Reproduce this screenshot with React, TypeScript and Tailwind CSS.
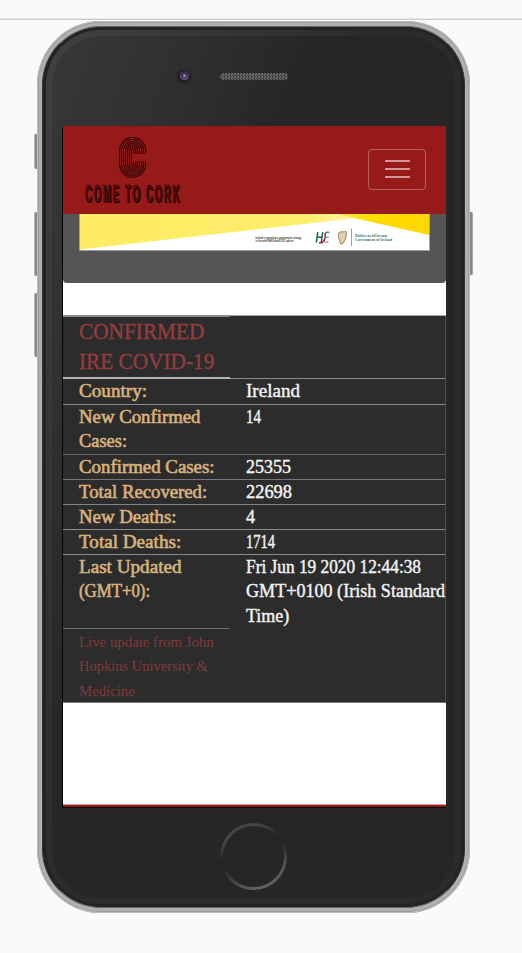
import { useLayoutEffect, useRef, useState } from "react";

type FitProps = { text: string; width: number; className?: string };

/* One line of text, stretched horizontally to a given measure. */
function Fit({ text, width, className = "" }: FitProps) {
  const ref = useRef<HTMLSpanElement>(null);
  const [scale, setScale] = useState(1);
  useLayoutEffect(() => {
    if (ref.current) setScale(width / ref.current.offsetWidth);
  }, [width, text]);
  return (
    <span className="block" style={{ width }}>
      <span
        ref={ref}
        className={`inline-block origin-left whitespace-nowrap align-top ${className}`}
        style={{ transform: `scaleX(${scale})` }}
      >
        {text}
      </span>
    </span>
  );
}

type Line = [string, number];
type Row = { label: Line[]; value: Line[]; height: string; line: string };

const rows: Row[] = [
  { label: [["Country:", 68]], value: [["Ireland", 54]], height: "h-[26px]", line: "border-[#8a8a8a]" },
  { label: [["New Confirmed", 121], ["Cases:", 48]], value: [["14", 15]], height: "h-[50px]", line: "border-[#656565]" },
  { label: [["Confirmed Cases:", 135]], value: [["25355", 45]], height: "h-[25px]", line: "border-[#777777]" },
  { label: [["Total Recovered:", 128]], value: [["22698", 46]], height: "h-[25px]", line: "border-[#858585]" },
  { label: [["New Deaths:", 97]], value: [["4", 9]], height: "h-[25px]", line: "border-[#8a8a8a]" },
  { label: [["Total Deaths:", 102]], value: [["1714", 29]], height: "h-[25px]", line: "border-[#8a8a8a]" },
];

function Label({ lines }: { lines: Line[] }) {
  return (
    <div className="w-[167px] shrink-0 pl-4 text-[18px] leading-[24.6px] text-[#d8b27c] [-webkit-text-stroke:0.6px_#d8b27c]">
      {lines.map(([t, w]) => <Fit key={t} text={t} width={w} />)}
    </div>
  );
}

function Value({ lines }: { lines: Line[] }) {
  return (
    <div className="pl-4 text-[18px] leading-[24.6px] text-[#f4f4f4] [-webkit-text-stroke:0.4px_#f4f4f4]">
      {lines.map(([t, w]) => <Fit key={t} text={t} width={w} />)}
    </div>
  );
}

function Logo() {
  return (
    <div className="ml-[22px] mt-[11px] w-[96px]">
      <svg className="ml-[34px] block" width="28" height="41" viewBox="0 0 28 41" fill="none" stroke="#2c0505" strokeWidth="1.05">
        {[0, 2, 4, 6, 8, 10, 12].map((d) => (
          <path
            key={d}
            d={`M${26.7 - d} 17V13.6A${13.1 - d} ${13.1 - d} 0 0 0 ${0.5 + d} 13.6V27.2A${13.1 - d} ${13.1 - d} 0 0 0 ${26.7 - d} 27.2V24.2`}
          />
        ))}
      </svg>
      <div className="mt-[4px] font-['Liberation_Sans',sans-serif] text-[24px] font-bold leading-[23px] tracking-[4px] text-[#5a0f0e] [-webkit-text-stroke:0.5px_#1c0303] [text-shadow:2px_1px_0_#0c0101]">
        <Fit text="COME TO CORK" width={96} />
      </div>
    </div>
  );
}

function Banner() {
  return (
    <svg className="mx-auto block" width="351" height="37" viewBox="79 214 351 37">
      <defs>
        <linearGradient id="pale" x1="0" x2="1">
          <stop offset="0" stopColor="#ffec62" />
          <stop offset=".8" stopColor="#ffed6c" />
          <stop offset="1" stopColor="#fff3a0" />
        </linearGradient>
        <linearGradient id="gold" x1="0" x2="1">
          <stop offset="0" stopColor="#ffe84a" />
          <stop offset=".35" stopColor="#ffdd00" />
          <stop offset="1" stopColor="#ffd800" />
        </linearGradient>
      </defs>
      <path d="M79 214H430V251H79Z" fill="#a0a0a0" />
      <path d="M80 214H429V250H80Z" fill="#fff" />
      <path d="M80 214H342L355 218.2L80 249.6Z" fill="url(#pale)" />
      <path d="M338 214H429V235L355 218.2Z" fill="url(#gold)" />
      <g fontFamily="Liberation Sans, sans-serif" fontWeight="bold" fontSize="3.4" fill="#333333">
        <text x="255.5" y="239.3" textLength="46" lengthAdjust="spacingAndGlyphs">Ireland is operating a containment strategy</text>
        <text x="255.5" y="242.2" textLength="38" lengthAdjust="spacingAndGlyphs">in line with WHO and ECDC advice</text>
      </g>
      <g fill="none" strokeWidth="1.5">
        <path d="M317.7 232.2L316.4 242.6M322.7 232.2L321.2 242.6M317 237.3H322" stroke="#10655b" />
        <path d="M328.5 232.2C323.5 231.8 325.5 236 325 238C324.4 241.5 323 243.2 319 242.8" stroke="#b51f42" />
        <path d="M326 232.3H329.5M326 237.2H328.8M325 242.1H328.5" stroke="#448c82" strokeWidth="1" />
      </g>
      <g stroke="#b09a68" fill="none">
        <path d="M338.5 233.5C341 230.5 343 232.5 346 231.5C347 237 344.5 243 341 244.2C339.8 241.2 337.8 239 338.5 233.5Z" fill="#ece5cc" strokeWidth="1.3" />
        <path d="M341 233V242M343 233V241M345 233V238" strokeWidth=".5" />
      </g>
      <path d="M351.5 228.5V246" stroke="#6da8a0" strokeWidth=".9" />
      <g fontFamily="Liberation Serif, serif" fontWeight="bold" fontSize="4.8" fill="#317c72">
        <text x="355" y="237" textLength="32" lengthAdjust="spacingAndGlyphs">Rialtas na hÉireann</text>
        <text x="355" y="241.2" textLength="37" lengthAdjust="spacingAndGlyphs">Government of Ireland</text>
      </g>
    </svg>
  );
}

function CovidTable() {
  return (
    <section className="h-[387px] border-b border-r border-[#777777] border-r-[#4b4b4b] bg-[#2c2c2c]">
      <div className="flex h-[63px]">
        <h2 className="-mt-px h-[64px] w-[167px] border-b-2 border-t-2 border-b-[#b8b4b4] border-t-[#8a8c8a] pl-4 text-[23px] leading-[30px] text-[#943c40] [-webkit-text-stroke:0.4px_#943c40]">
          <Fit text="CONFIRMED" width={125} />
          <Fit text="IRE COVID-19" width={135} />
        </h2>
        <div className="flex-1 border-b border-[#8a8a8a]" />
      </div>
      {rows.map((r) => (
        <div key={r.label[0][0]} className={`flex border-b ${r.height} ${r.line}`}>
          <Label lines={r.label} />
          <Value lines={r.value} />
        </div>
      ))}
      <div className="flex h-[74px]">
        <div className="h-full border-b border-[#707070]">
          <Label lines={[["Last Updated", 102], ["(GMT+0):", 71]]} />
        </div>
        <Value lines={[["Fri Jun 19 2020 12:44:38", 175], ["GMT+0100 (Irish Standard", 199], ["Time)", 43]]} />
      </div>
      <div className="pl-4 pt-px text-[14.5px] leading-[24.5px] text-[#803a3e]">
        <Fit text="Live update from John" width={135} />
        <Fit text="Hopkins University &" width={129} />
        <Fit text="Medicine" width={56} />
      </div>
    </section>
  );
}

function Screen() {
  return (
    <main className="ml-[11px] mt-[90px] h-[681px] w-[383px] overflow-clip bg-white font-['Liberation_Serif',serif] shadow-[-1px_1px_0_#050505]">
      <header className="flex h-[88px] justify-between bg-[#951a18]">
        <Logo />
        <button aria-label="Menu" className="mr-5 mt-[23px] flex h-[41px] w-[58px] flex-col items-center justify-center gap-[6px] rounded border-[1.5px] border-white/30">
          <span className="h-[2px] w-[25px] bg-white/55" />
          <span className="h-[2px] w-[25px] bg-white/55" />
          <span className="h-[2px] w-[25px] bg-white/55" />
        </button>
      </header>
      <div className="h-[69px] rounded-b-[4px] bg-[#555555]">
        <Banner />
      </div>
      <div className="h-[32px]" />
      <div className="h-px bg-[#a5a8a5]" />
      <CovidTable />
      <div className="h-[101px]" />
      <div className="h-[3px] border-t border-[#d5a5a4] bg-[#951a18]" />
    </main>
  );
}

export default function App() {
  return (
    <div className="h-[953px] w-[522px] overflow-hidden bg-[#fafafa] pt-[18px]">
      <div className="h-[2px] border-b border-[#cbcbcb] bg-[#e7e7e7]" />
      <div className="relative ml-[37px] mt-[0.5px] h-[892px] w-[433px]">
        <i className="absolute -left-[3px] top-[113px] h-[35px] w-[4px] rounded-l-[2px] border-l border-[#b5b7ba] bg-[#85888c]" />
        <i className="absolute -left-[3px] top-[191px] h-[64px] w-[4px] rounded-l-[2px] border-l border-[#b5b7ba] bg-[#85888c]" />
        <i className="absolute -left-[3px] top-[272px] h-[64px] w-[4px] rounded-l-[2px] border-l border-[#b5b7ba] bg-[#85888c]" />
        <i className="absolute -right-[3px] top-[191px] h-[63px] w-[4px] rounded-r-[2px] border-r border-[#a5a5ae] bg-[#85858c]" />
        <div className="relative h-full w-full rounded-[64px] bg-[#b0b0b0] p-[5px] shadow-[inset_0_0_0_1px_#bebebe,inset_0_0_0_1.7px_#969696]">
          <div className="h-full w-full rounded-[59px] border border-[#666666] border-x-[#333333] bg-[#232323] p-[3px]">
            <div className="h-full w-full rounded-[55px] bg-[linear-gradient(110deg,#414141_0%,#373737_20%,#2b2b2b_45%,#2b2b2b_100%)] p-[6px]">
              <div className="relative flow-root h-full w-full rounded-[49px] bg-[linear-gradient(110deg,#383838_0%,#303030_19%,#262626_37%,#262626_100%)]">
                <div className="absolute left-[124px] top-[32px] flex h-[16px] w-[16px] items-center justify-center rounded-full bg-[#222222] shadow-[inset_0_1px_1px_#373737]">
                  <span className="flex h-[9px] w-[9px] items-center justify-center rounded-full bg-[#3c3052] shadow-[inset_0_-2px_2px_#5e5180]">
                    <span className="h-[3px] w-[3px] rounded-full bg-[#8f84a6]" />
                  </span>
                </div>
                <div className="absolute left-[168px] top-[37px] h-[7px] w-[68px] rounded-full bg-[#6d6d6d] bg-[conic-gradient(#414141_25%,#6d6d6d_0_50%,#414141_0_75%,#6d6d6d_0)] bg-[length:3px_3px]" />
                <Screen />
                <div className="ml-[168px] mt-[16px] h-[67px] w-[67px] rounded-full bg-[linear-gradient(155deg,#484848_0%,#444444_22%,#262626_40%,#262626_50%,#555555_75%,#737373_100%)] p-[3px]">
                  <div className="h-full w-full rounded-full bg-[#262626]" />
                </div>
              </div>
            </div>
          </div>
        </div>
      </div>
    </div>
  );
}
